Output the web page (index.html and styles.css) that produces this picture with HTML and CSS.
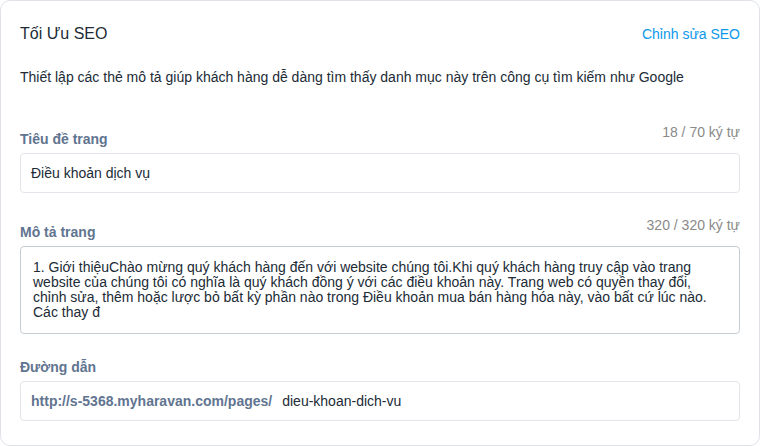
FILE: index.html
```html
<!DOCTYPE html>
<html>
<head>
<meta charset="utf-8">
<link rel="stylesheet" href="styles.css">
<title>Tối Ưu SEO</title>
</head>
<body>
  <div class="the-seo">
    <div class="the-seo-head">
      <h2 class="the-seo-title">Tối Ưu SEO</h2>
      <a class="the-seo-edit" href="#">Chỉnh sửa SEO</a>
    </div>
    <p class="the-seo-mota">Thiết lập các thẻ mô tả giúp khách hàng dễ dàng tìm thấy danh mục này trên công cụ tìm kiếm như Google</p>

    <div class="truong truong-dau">
      <div class="truong-nhan">
        <label>Tiêu đề trang</label>
        <span class="dem-ky-tu">18 / 70 ký tự</span>
      </div>
      <div class="o-nhap">Điều khoản dịch vụ</div>
    </div>

    <div class="truong">
      <div class="truong-nhan">
        <label>Mô tả trang</label>
        <span class="dem-ky-tu">320 / 320 ký tự</span>
      </div>
      <div class="o-van-ban">1. Giới thiệuChào mừng quý khách hàng đến với website chúng tôi.Khi quý khách hàng truy cập vào trang website của chúng tôi có nghĩa là quý khách đồng ý với các điều khoản này. Trang web có quyền thay đổi, chỉnh sửa, thêm hoặc lược bỏ bất kỳ phần nào trong Điều khoản mua bán hàng hóa này, vào bất cứ lúc nào. Các thay đ</div>
    </div>

    <div class="truong truong-cuoi">
      <div class="truong-nhan">
        <label>Đường dẫn</label>
      </div>
      <div class="o-nhap">
        <span class="duong-dan-goc">http://s-5368.myharavan.com/pages/</span>
        <span>dieu-khoan-dich-vu</span>
      </div>
    </div>
  </div>
</body>
</html>
```

FILE: styles.css
```css
body {
  margin: 0;
  background-color: #ffffff;
  font-family: "Liberation Sans", Arial, sans-serif;
  color: #212b36;
}

.the-seo {
  box-sizing: border-box;
  width: 760px;
  height: 446px;
  border: 1px solid #dfe3e8;
  border-radius: 10px;
  padding: 23px 19px 0 19px;
}

.the-seo-head {
  display: flex;
  justify-content: space-between;
  align-items: baseline;
}

.the-seo-title {
  margin: 0;
  font-size: 16px;
  font-weight: normal;
  line-height: 20px;
}

.the-seo-edit {
  color: #0d98ea;
  font-size: 14px;
  text-decoration: none;
}

.the-seo-mota {
  margin: 23px 0 0 0;
  font-size: 14px;
  line-height: 20px;
}

.truong {
  margin-top: 29px;
}

.truong-dau {
  margin-top: 42px;
}

.truong-cuoi {
  margin-top: 23px;
}

.truong-nhan {
  display: flex;
  justify-content: space-between;
  align-items: flex-start;
  margin-bottom: 4px;
}

.truong-nhan label {
  font-size: 14px;
  font-weight: bold;
  line-height: 20px;
  color: #617490;
}

.dem-ky-tu {
  font-size: 14px;
  line-height: 20px;
  color: #8a8a8a;
  margin-top: -7px;
}

.o-nhap {
  box-sizing: border-box;
  height: 40px;
  border: 1px solid #e3e6ea;
  border-radius: 4px;
  padding: 0 10px;
  display: flex;
  align-items: center;
  font-size: 14px;
}

.duong-dan-goc {
  font-weight: bold;
  color: #617490;
  margin-right: 10px;
}

.o-van-ban {
  box-sizing: border-box;
  height: 88px;
  border: 1px solid #c4cdd5;
  border-radius: 4px;
  padding: 13px 12px;
  font-size: 14px;
  line-height: 15px;
}
```
